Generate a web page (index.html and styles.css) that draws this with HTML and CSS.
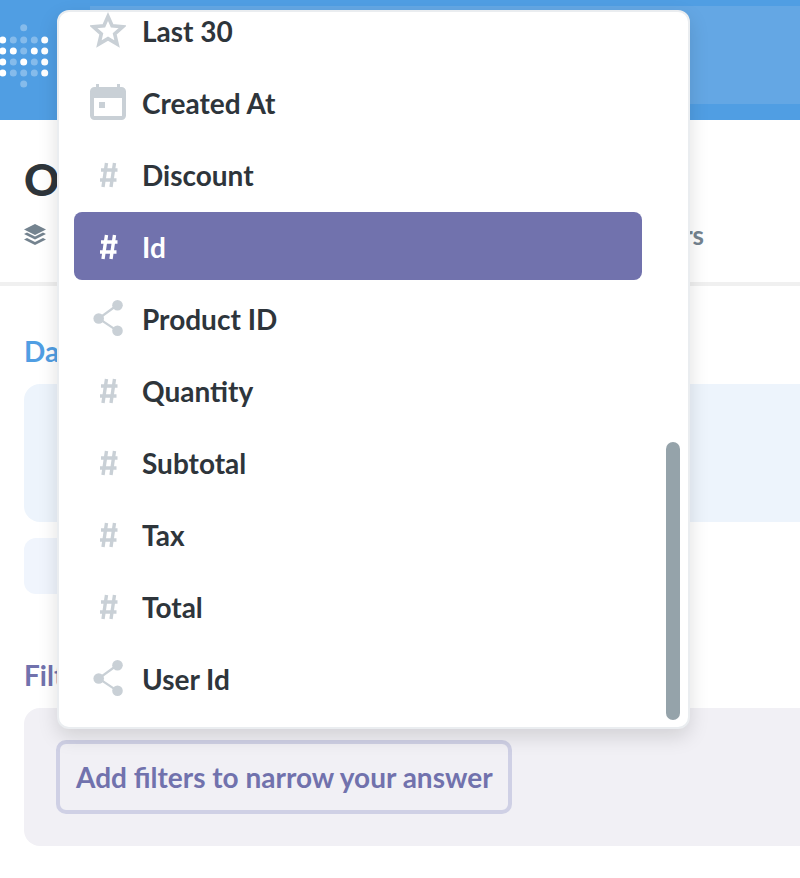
FILE: index.html
```html
<!DOCTYPE html>
<html lang="en">
  <head>
    <meta charset="UTF-8" />
    <meta name="viewport" content="width=device-width, initial-scale=1.0" />
    <title>Orders</title>
    <link rel="stylesheet" href="styles.css">
  </head>
  <body>
    <svg class="icon-defs" width="0" height="0">
      <symbol id="icon-star" viewBox="0 0 36 36">
        <path d="M18 4.500l4.100 9.300 10.600 1-8 7 2.400 10.200-9.100-5.300-9.100 5.300 2.400-10.200-8-7 10.600-1z" fill="none" stroke="currentColor" stroke-width="3.600" />
      </symbol>
      <symbol id="icon-calendar" viewBox="0 0 36 36">
        <path d="M6 3V0h3v3h18V0h3v3h1.500A4.500 4.500 0 0 1 36 7.500v24a4.500 4.500 0 0 1-4.500 4.500h-27A4.500 4.500 0 0 1 0 31.500v-24A4.500 4.500 0 0 1 4.500 3zM4 14v17.500a.5.5 0 0 0 .5.5h27a.5.5 0 0 0 .5-.5V14z" fill="currentColor" fill-rule="evenodd" />
        <rect x="9" y="18" width="6" height="6" fill="currentColor" />
      </symbol>
      <symbol id="icon-hash" viewBox="0 0 36 36">
        <path d="M16.500 7L13 31M24.500 7L21 31M11 14h16.500M10 24h16.500" fill="none" stroke="currentColor" stroke-width="3.400" />
      </symbol>
      <symbol id="icon-share" viewBox="0 0 36 36">
        <path d="M27.300 5L8.700 18.500l18.600 12.300" fill="none" stroke="currentColor" stroke-width="2.200" />
        <circle cx="27.500" cy="5.300" r="5.300" fill="currentColor" />
        <circle cx="8.700" cy="18.500" r="5.300" fill="currentColor" />
        <circle cx="27.500" cy="30.700" r="5.300" fill="currentColor" />
      </symbol>
    </svg>

    <header class="nav">
      <svg class="logo" width="48" height="68" viewBox="0 0 48 68">
        <g fill="#fff">
          <circle cx="2.700" cy="14" r="3.500" /><circle cx="44.700" cy="14" r="3.500" />
          <circle cx="2.700" cy="25" r="3.500" /><circle cx="13.300" cy="25" r="3.500" /><circle cx="34.300" cy="25" r="3.500" /><circle cx="44.700" cy="25" r="3.500" />
          <circle cx="2.700" cy="36" r="3.500" /><circle cx="23.700" cy="36" r="3.500" /><circle cx="44.700" cy="36" r="3.500" />
          <circle cx="2.700" cy="47" r="3.500" /><circle cx="44.700" cy="47" r="3.500" />
        </g>
        <g fill="#fff" opacity="0.3">
          <circle cx="23.700" cy="1.700" r="3.500" />
          <circle cx="13.300" cy="14" r="3.500" /><circle cx="23.700" cy="14" r="3.500" /><circle cx="34.300" cy="14" r="3.500" />
          <circle cx="23.700" cy="25" r="3.500" />
          <circle cx="13.300" cy="36" r="3.500" /><circle cx="34.300" cy="36" r="3.500" />
          <circle cx="13.300" cy="47" r="3.500" /><circle cx="23.700" cy="47" r="3.500" /><circle cx="34.300" cy="47" r="3.500" />
          <circle cx="23.700" cy="58" r="3.500" />
        </g>
      </svg>
      <div class="nav-search"></div>
    </header>

    <section class="title-bar">
      <h1>Orders</h1>
      <div class="subtitle">
        <svg class="layers" width="22" height="22" viewBox="0 0 22 22">
          <path d="M11 0l11 5.500L11 11 0 5.500z" fill="currentColor" />
          <path d="M0 10l3-1.400 8 4 8-4 3 1.400-11 5.500z" fill="currentColor" />
          <path d="M0 15.500l3-1.400 8 4 8-4 3 1.400L11 21z" fill="currentColor" />
        </svg>
        <span class="subtitle-name">Sample Dataset</span>
        <span class="subtitle-end">Orders</span>
      </div>
    </section>

    <main class="content">
      <h2 class="section-label data-label">Data</h2>
      <div class="data-box"></div>
      <div class="data-step"></div>
      <h2 class="section-label filter-label">Filter</h2>
      <div class="filter-box">
        <div class="filter-add">Add filters to narrow your answer</div>
      </div>
    </main>

    <div class="popover">
      <ul class="field-list">
        <li class="field"><svg class="field-icon"><use href="#icon-star" /></svg>Last 30</li>
        <li class="field"><svg class="field-icon"><use href="#icon-calendar" /></svg>Created At</li>
        <li class="field"><svg class="field-icon"><use href="#icon-hash" /></svg>Discount</li>
        <li class="field active"><svg class="field-icon"><use href="#icon-hash" /></svg>Id</li>
        <li class="field"><svg class="field-icon"><use href="#icon-share" /></svg>Product ID</li>
        <li class="field"><svg class="field-icon"><use href="#icon-hash" /></svg>Quantity</li>
        <li class="field"><svg class="field-icon"><use href="#icon-hash" /></svg>Subtotal</li>
        <li class="field"><svg class="field-icon"><use href="#icon-hash" /></svg>Tax</li>
        <li class="field"><svg class="field-icon"><use href="#icon-hash" /></svg>Total</li>
        <li class="field"><svg class="field-icon"><use href="#icon-share" /></svg>User Id</li>
      </ul>
      <div class="scroll-thumb"></div>
    </div>
  </body>
</html>
```

FILE: styles.css
```css
html,
body {
  height: 100%;
}
body {
  margin: 0;
  background: #fff;
  color: #2e353b;
  font-family: "Lato", "Liberation Sans", sans-serif;
  font-weight: 700;
  font-size: 28px;
  overflow: hidden;
}
.icon-defs {
  position: absolute;
}
.nav {
  display: flex;
  height: 120px;
  padding-top: 6px;
  box-sizing: border-box;
  background: #509ee3;
  overflow: hidden;
}
.logo {
  flex: none;
  margin-top: 20px;
  overflow: visible;
}
.nav-search {
  flex: none;
  width: 760px;
  height: 98px;
  margin-left: 42px;
  background: #64a7e4;
}
.title-bar {
  height: 166px;
  box-sizing: border-box;
  padding: 34px 96px 0 24px;
  border-bottom: 4px solid #f0f0f0;
}
.title-bar h1 {
  margin: 0;
  font-size: 44px;
  font-weight: 900;
  line-height: 50px;
}
.subtitle {
  display: flex;
  align-items: center;
  height: 34px;
  margin-top: 14px;
  color: #74838f;
  font-size: 26px;
}
.layers {
  margin-right: 12px;
}
.subtitle-end {
  margin-left: auto;
}
.content {
  padding: 47px 24px 0;
}
.section-label {
  margin: 0;
  font-size: 28px;
  line-height: 36px;
}
.data-label {
  color: #509ee3;
}
.filter-label {
  margin-top: 63px;
  color: #7172ad;
}
.data-box {
  width: 800px;
  height: 138px;
  margin-top: 15px;
  background: #edf4fc;
  border-radius: 16px;
}
.data-step {
  width: 420px;
  height: 56px;
  margin-top: 16px;
  background: #f0f5fd;
  border-radius: 12px;
}
.filter-box {
  display: flex;
  align-items: center;
  width: 800px;
  height: 138px;
  margin-top: 15px;
  padding-left: 32px;
  box-sizing: border-box;
  background: #f1f0f5;
  border-radius: 16px;
}
.filter-add {
  padding: 0 15px 0 16px;
  line-height: 66px;
  border: 4px solid #cfd0e5;
  border-radius: 10px;
  color: #7172ad;
}
.popover {
  position: absolute;
  top: 10px;
  left: 57px;
  width: 633px;
  height: 719px;
  box-sizing: border-box;
  background: #fff;
  border: 2px solid #eaedf0;
  border-radius: 12px;
  box-shadow: 0 8px 20px rgba(0, 0, 0, 0.13);
  overflow: hidden;
}
.field-list {
  margin: -16px 0 0;
  padding: 0 0 0 15px;
  list-style: none;
}
.field {
  display: flex;
  align-items: center;
  width: 568px;
  height: 68px;
  margin-bottom: 4px;
  padding: 2px 16px 0;
  box-sizing: border-box;
  border-radius: 8px;
}
.field-icon {
  flex: none;
  width: 36px;
  height: 36px;
  margin: 0 16px 2px 0;
  color: #c9d0d6;
}
.field.active {
  background: #7172ad;
  color: #fff;
}
.field.active .field-icon {
  color: #fff;
}
.scroll-thumb {
  position: absolute;
  top: 430px;
  left: 607px;
  width: 14px;
  height: 278px;
  background: #95a3aa;
  border-radius: 7px;
}
```
